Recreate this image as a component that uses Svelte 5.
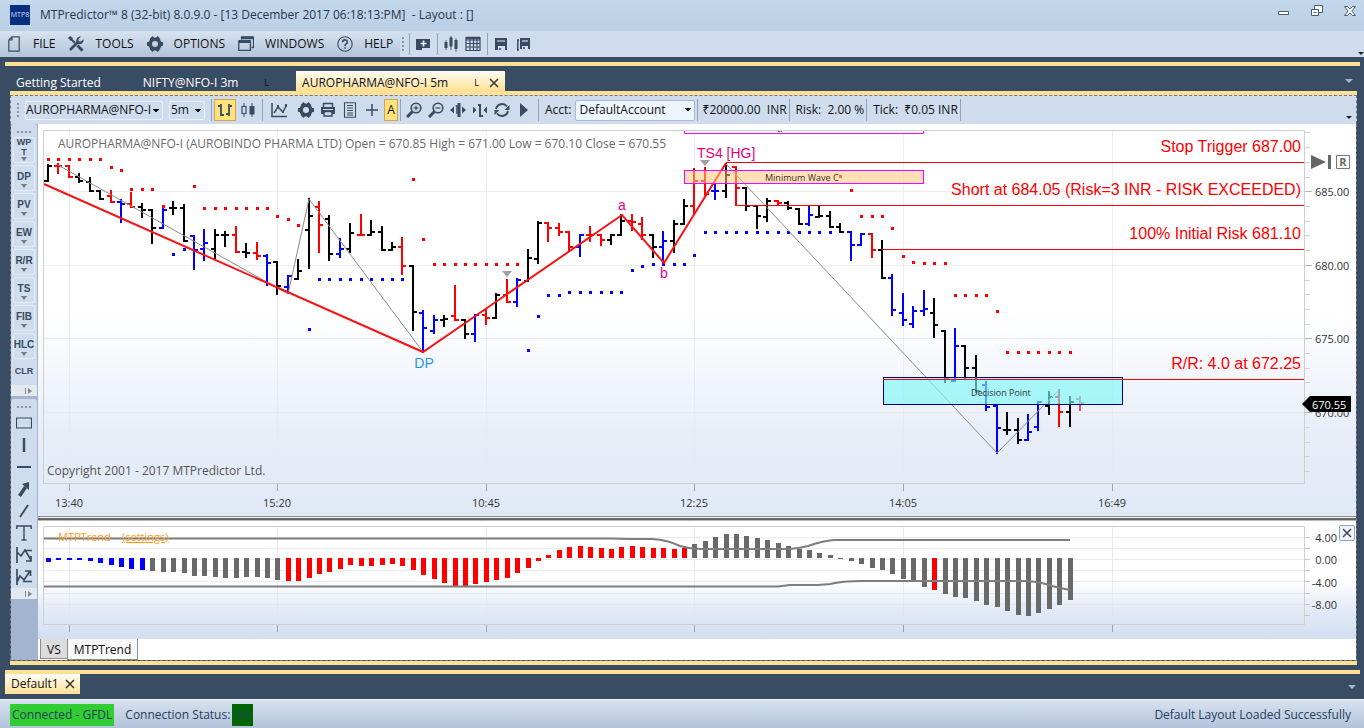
<script>
    // x of a bar from its index
    const barX = (i) => Math.round(48 + i * 10.425);

    // open, high, low, close (chart y) and colour: k black, r red, b blue
    const bars = [
        [181, 165, 181, 166, 'k'], [166, 164, 173, 166, 'r'], [166, 166, 177, 177, 'r'], [177, 174, 182, 181, 'k'],
        [182, 178, 191, 191, 'k'], [191, 191, 199, 199, 'k'], [196, 191, 202, 202, 'r'], [202, 200, 222, 204, 'b'],
        [204, 193, 207, 207, 'r'], [207, 204, 217, 210, 'k'], [210, 210, 243, 228, 'k'], [228, 206, 228, 210, 'b'],
        [208, 202, 214, 208, 'k'], [208, 205, 241, 241, 'k'], [236, 236, 269, 250, 'b'], [249, 230, 260, 243, 'b'],
        [249, 230, 259, 235, 'k'], [235, 232, 246, 235, 'k'], [235, 227, 252, 252, 'r'], [252, 244, 257, 253, 'k'],
        [253, 243, 259, 256, 'r'], [256, 255, 285, 263, 'b'], [262, 262, 294, 286, 'k'], [287, 276, 293, 276, 'b'],
        [279, 260, 279, 271, 'k'], [230, 199, 268, 216, 'k'], [207, 202, 252, 225, 'r'], [219, 216, 260, 254, 'k'],
        [254, 239, 257, 249, 'b'], [249, 224, 252, 233, 'k'], [235, 215, 235, 235, 'r'], [235, 221, 235, 232, 'k'],
        [232, 227, 250, 250, 'k'], [250, 243, 250, 247, 'k'], [247, 238, 274, 266, 'r'], [266, 266, 330, 312, 'k'],
        [313, 311, 352, 328, 'b'], [331, 316, 333, 320, 'b'], [320, 316, 326, 319, 'k'], [316, 286, 320, 320, 'r'],
        [320, 320, 338, 334, 'k'], [334, 315, 341, 315, 'b'], [315, 309, 324, 318, 'r'], [318, 294, 318, 295, 'k'],
        [295, 280, 302, 302, 'r'], [302, 279, 306, 280, 'b'], [281, 250, 281, 258, 'k'], [259, 222, 263, 223, 'k'],
        [223, 223, 241, 228, 'r'], [228, 224, 235, 232, 'r'], [232, 232, 251, 247, 'r'], [247, 235, 256, 235, 'b'],
        [235, 227, 241, 235, 'r'], [235, 235, 245, 240, 'r'], [240, 235, 244, 235, 'k'], [235, 215, 235, 221, 'k'],
        [221, 215, 230, 222, 'r'], [224, 218, 239, 235, 'r'], [235, 235, 257, 247, 'k'], [247, 232, 263, 241, 'b'],
        [241, 221, 252, 224, 'k'], [224, 200, 224, 206, 'k'], [206, 169, 213, 181, 'r'], [181, 168, 195, 194, 'r'],
        [191, 184, 199, 191, 'b'], [191, 164, 197, 175, 'k'], [167, 167, 205, 188, 'r'], [188, 188, 210, 206, 'k'],
        [206, 206, 228, 216, 'k'], [217, 199, 221, 201, 'k'], [201, 201, 205, 203, 'r'], [203, 202, 209, 208, 'k'],
        [209, 209, 224, 224, 'k'], [224, 207, 225, 215, 'b'], [217, 207, 217, 216, 'k'], [216, 212, 227, 227, 'k'],
        [227, 224, 232, 232, 'k'], [232, 232, 260, 245, 'b'], [245, 234, 245, 234, 'b'], [234, 234, 257, 250, 'r'],
        [250, 241, 278, 278, 'k'], [278, 275, 315, 310, 'b'], [313, 294, 325, 320, 'b'], [324, 307, 327, 311, 'b'],
        [311, 291, 315, 309, 'b'], [313, 299, 337, 325, 'k'], [331, 331, 382, 379, 'k'], [381, 329, 381, 346, 'b'],
        [346, 346, 379, 368, 'k'], [368, 356, 392, 391, 'k'], [385, 382, 410, 407, 'b'], [406, 406, 453, 428, 'b'],
        [430, 413, 434, 430, 'k'], [430, 419, 443, 440, 'k'], [440, 415, 440, 432, 'b'], [427, 402, 430, 402, 'b'],
        [406, 392, 414, 397, 'k'], [397, 390, 426, 412, 'r'], [412, 397, 426, 402, 'k'], [399, 397, 410, 403, 'p']
    ];
    const barColors = { k: '#000', r: '#f00', b: '#00f', p: '#e05a5e' };

    // stop dots: first index, last index, y
    const redDots = [
        [0, 5, 159], [6, 6, 167], [7, 7, 170], [8, 10, 189], [11, 11, 206], [14, 14, 186], [15, 21, 208],
        [22, 22, 216], [23, 23, 219], [24, 24, 225], [35, 35, 179], [36, 36, 239], [37, 45, 264], [76, 76, 176],
        [77, 77, 190], [78, 80, 216], [81, 81, 228], [82, 82, 256], [83, 83, 262], [84, 86, 263], [87, 90, 295],
        [91, 91, 311], [92, 98, 352]
    ];
    const blueDots = [
        [12, 12, 254], [13, 13, 249], [25, 25, 329], [26, 34, 279], [46, 46, 350], [47, 47, 316], [48, 49, 295],
        [50, 55, 292], [56, 56, 270], [57, 57, 266], [58, 61, 264], [62, 62, 255], [63, 75, 232]
    ];
    const spread = (runs) => runs.flatMap(([a, b, y]) => Array.from({ length: b - a + 1 }, (_, n) => [barX(a + n), y]));

    const trend = [
        562, 560, 560, 560, 561, 563, 565, 567, 569, 570, 571, 572, 572, 573, 576, 576, 577, 578, 578, 577, 577, 578,
        580, 581, 581, 578, 574, 572, 569, 565, 566, 566, 565, 564, 566, 570, 575, 579, 583, 586, 586, 584, 582, 580,
        578, 573, 568, 561, 555, 550, 547, 546, 547, 548, 549, 547, 546, 547, 548, 548, 549, 548, 544, 541, 537, 534,
        534, 536, 538, 540, 543, 546, 549, 550, 553, 555, 558, 561, 564, 568, 570, 574, 579, 582, 587, 590, 594, 597,
        598, 601, 605, 607, 611, 615, 616, 613, 609, 605, 600
    ];
    function trendColor(i) {
        if (i < 10) return '#00f';
        if ((i > 22 && i < 62) || i === 85) return '#f00';
        return '#696969';
    }

    const times = [[69, '13:40'], [277, '15:20'], [486, '10:45'], [694, '12:25'], [903, '14:05'], [1112, '16:49']];
    const prices = [[191, '685.00'], [265, '680.00'], [338, '675.00'], [412, '670.00']];
    const minorTicks = [132, 147, 162, 177, 206, 221, 235, 250, 280, 294, 309, 324, 353, 368, 382, 397, 427, 442, 456, 471];
    const trendTicks = [[537, '4.00'], [559, '0.00'], [582, '-4.00'], [604, '-8.00']];
    const trendGrid = [537, 548, 559, 570, 581, 593, 604, 615];
    const levels = [
        { x: 726, y: 162, text: 'Stop Trigger 687.00' },
        { x: 736, y: 205, text: 'Short at 684.05 (Risk=3 INR - RISK EXCEEDED)' },
        { x: 882, y: 249, text: '100% Initial Risk 681.10' },
        { x: 883, y: 379, text: 'R/R: 4.0 at 672.25' }
    ];

    const menus = ['FILE', 'TOOLS', 'OPTIONS', 'WINDOWS', 'HELP'];
    const studies = ['WPT', 'DP', 'PV', 'EW', 'R/R', 'TS', 'FIB', 'HLC'];
    const drawTools = ['rect', 'vline', 'hline', 'arrow', 'slash', 'text', 'wave', 'wave2'];
</script>

{#snippet icon(name)}
    <svg class="icon" width="16" height="16" viewBox="0 0 16 16" fill="none" stroke="#394b62" stroke-width="1.5" aria-hidden="true">
        {#if name === 'FILE'}
            <path d="M6 .8h7.2v14.4H2.8V4zM6 1v3H3" stroke-width="1.2" />
        {:else if name === 'TOOLS'}
            <path d="M3 3l4 4M10 10l4 4" stroke-width="2" />
            <path d="M2 14l8-8" stroke-width="2.6" />
            <path d="M13 .5l-2.5 2.7.2 2 2 .2L15.500 3.200a4 4 0 0 1-5.400 4.600 4 4 0 0 1 2.900-7.300z" fill="#394b62" stroke="none" />
            <path d="M0 2l2-2 3 2-2 3zM8.500 10.500l2-2 5 5-2 2.300z" fill="#394b62" stroke="none" />
        {:else if name === 'OPTIONS'}
            <circle cx="8" cy="8" r="4.8" stroke-width="3.6" />
            <path d="M4 1.500l2 2M12 1.500l-2 2M0 8h3M13 8h3M4 14.500l2-2M12 14.500l-2-2" stroke-width="4" />
        {:else if name === 'WINDOWS'}
            <path d="M3.500 3.500v-2h12v10h-2M.8 4.800h11.600v9.600H.8z" stroke-width="1.300" />
            <path d="M1 5.500h11.500M3 1.800h12.500" stroke-width="3" />
        {:else if name === 'HELP'}
            <circle cx="8" cy="8" r="7.2" stroke-width="1.1" />
            <path d="M5.6 6.200c0-3 4.800-3 4.800-.3C10.400 7.700 8 7.800 8 10M8 11.200v1.600" stroke-width="1.600" />
        {:else if name === 'folder'}
            <path d="M1 3h14v9H7v2H1z" fill="#394b62" stroke="none" />
            <path d="M8.500 4.500v6M5.500 7.500h6" stroke="#e4edf8" stroke-width="1.700" />
        {:else if name === 'bars'}
            <path d="M3 6v6M8 1.500v9M13 4v9" stroke-width="3" /><path d="M8 0v14M13 2v14M3 4v10" stroke-width=".8" />
        {:else if name === 'grid'}
            <path d="M1 1.500h14v13H1zM1 4h14M1 7.500h14M1 11h14M5 3v12M8.500 3v12M12 3v12" stroke-width="1.200" /><path d="M1 2h14" stroke-width="2.500" />
        {:else if name === 'save'}
            <path d="M2 2h12v12h-2v-4H5v4H2z" fill="#394b62" stroke="none" /><path d="M4 5h8" stroke="#a9b8cb" stroke-width="1.500" /><path d="M7 12v2" />
        {:else if name === 'saveall'}
            <path d="M5 2h10v11h-2v-3H7v3H5z" fill="#394b62" stroke="none" /><path d="M7 5h6" stroke="#b8c7d8" /><path d="M4 4H2.800v10H4M9 11v2" />
        {:else if name === 'ohlc'}
            <path d="M1 4h3M4 2v12M4 13h3M9 12h3M12 2v12M12 4h3" stroke-width="1.800" />
        {:else if name === 'candle'}
            <path d="M4 1v14" stroke-width="1" /><path d="M2 4.500h4v7H2z" fill="#cfdced" stroke-width="1.200" /><path d="M12 1v14" stroke-width="1" /><path d="M9.500 4h5v8.500h-5z" fill="#394b62" stroke="none" />
        {:else if name === 'line'}
            <path d="M1 1v13.500h15M3 11l4-6 5 5 3-6" /><path d="M6 3h2v3H6zM11 9h2v2h-2zM14 2h2v3h-2z" fill="#394b62" stroke="none" />
        {:else if name === 'print'}
            <path d="M3.500 5V1.500h9V5" /><path d="M1 5h14v7H1z" fill="#394b62" stroke="none" /><path d="M4 9.500h8V14H4z" fill="#cfdced" /><path d="M3 7.500h10" stroke="#cfdced" stroke-width="1" />
        {:else if name === 'doc'}
            <path d="M2.500.8h11v14.400h-11zM5 3.500h6M5 6h6M5 8.500h6M5 11h6M5 13h6" stroke-width="1.100" />
        {:else if name === 'plus'}
            <path d="M8 2v12M2 8h12" />
        {:else if name === 'zoomin' || name === 'zoomout'}
            <circle cx="10" cy="6" r="4.800" stroke-width="1.600" /><path d="M6.500 9.500L1 15" stroke-width="3" /><path d="M7.500 6h5" stroke-width="1.200" />
            {#if name === 'zoomin'}<path d="M10 3.500v5" stroke-width="1.200" />{/if}
        {:else if name === 'widen'}
            <path d="M5.500 4h1.500v8" stroke-width="1.500" /><path d="M9 1v14" stroke-width="3" /><path d="M4 4.500v7L0 8zM12 4.500v7L16 8z" fill="#394b62" stroke="none" />
        {:else if name === 'narrow'}
            <path d="M6 3h2v11h3" stroke-width="2" /><path d="M1 4.500v7L4.500 8zM15 4.500v7L11.500 8z" fill="#394b62" stroke="none" />
        {:else if name === 'refresh'}
            <path d="M2 7a6.200 6.200 0 0 1 11-2.500M14 9a6.200 6.200 0 0 1-11 2.500" stroke-width="2" /><path d="M15.500 3v5H10.500zM.5 13V8h5z" fill="#394b62" stroke="none" />
        {:else if name === 'play'}
            <path d="M4 1l8 7-8 7z" fill="#394b62" stroke="none" />
        {:else if name === 'rect'}
            <path d="M.5 3h15v10H.5z" stroke-width="1.200" />
        {:else if name === 'vline'}
            <path d="M8 1v14" stroke-width="2.500" />
        {:else if name === 'hline'}
            <path d="M1 8h14" stroke-width="2" />
        {:else if name === 'arrow'}
            <path d="M3.500 15l6-9" stroke-width="3.500" /><path d="M6 3l7-2v8z" fill="#394b62" stroke="none" />
        {:else if name === 'slash'}
            <path d="M4 14l8-12" stroke-width="1.800" />
        {:else if name === 'text'}
            <path d="M.8 4V1h14.400v3M8 1v14M5.500 15h5" stroke-width="1.400" />
        {:else if name === 'wave'}
            <path d="M1 0v16M1 5l4 4 4-6 6 10M8.500 3.500H16M15 9v5h-5" stroke-width="1.700" />
        {:else if name === 'wave2'}
            <path d="M1 0v16M1 13l3-6 4 4 6-9M9 2h5.500v5M7 12.500h9" stroke-width="1.700" />
        {:else if name === 'more'}
            <path d="M7.500 5v6" stroke="#888" stroke-width="1" /><path d="M10 5v6l4-3z" fill="#888" stroke="none" />
        {/if}
    </svg>
{/snippet}

{#snippet closeX()}
    <svg width="10" height="10" viewBox="0 0 10 10" stroke="#3b3a32" stroke-width="1.6" aria-hidden="true"><path d="M1 1l8 8M9 1L1 9" /></svg>
{/snippet}

<div class="app">
    <header class="titlebar">
        <span class="logo">MTP8</span>
        <h1>MTPredictor™ 8 (32-bit) 8.0.9.0 - [13 December 2017 06:18:13:PM]&nbsp; - Layout : []</h1>
        <div class="window-buttons">
            <button aria-label="Minimize">
                <svg width="12" height="12" viewBox="0 0 12 12" fill="#fff" stroke="#4b5b70"><path d="M.5 6.500h10v3H.5z" /></svg>
            </button>
            <button aria-label="Restore">
                <svg width="12" height="12" viewBox="0 0 12 12" fill="#fff" stroke="#4b5b70"><path d="M3.500.5h8v7h-8z" /><path d="M.5 4.500h7v6h-7z" /><path d="M2.500 7.500h3" /></svg>
            </button>
            <button aria-label="Close">
                <svg width="12" height="12" viewBox="0 0 12 12" fill="#fff" stroke="#4b5b70"><path d="M.5 1.500h3L6 4l2.500-2.500h3L7.800 6l3.700 4.500h-3L6 8l-2.500 2.500h-3L4.200 6z" /></svg>
            </button>
        </div>
    </header>

    <div class="menubar">
        <nav>
            {#each menus as menu}
                <button>{@render icon(menu)}<span>{menu}</span></button>
            {/each}
        </nav>
        <div class="quick">
            <i class="grip"></i><i class="sep"></i>
            <button aria-label="New">{@render icon('folder')}</button><i class="sep"></i>
            <button aria-label="Chart">{@render icon('bars')}</button>
            <button aria-label="Table">{@render icon('grid')}</button><i class="sep"></i>
            <button aria-label="Save">{@render icon('save')}</button>
            <button aria-label="Save all">{@render icon('saveall')}</button>
        </div>
        <span class="overflow"></span>
    </div>

    <div class="frame">
        <div class="doc">
            <div class="tabs">
                <button class="tab first">Getting Started</button>
                <button class="tab second">NIFTY@NFO-I 3m <small>L</small></button>
                <button class="tab active">AUROPHARMA@NFO-I 5m <small>L</small>{@render closeX()}</button>
                <span class="caret"></span>
            </div>

            <main>
                <div class="toolbar">
                    <i class="grip"></i>
                    <select class="symbol" aria-label="Symbol"><option>AUROPHARMA@NFO-I</option></select>
                    <select class="period" aria-label="Period"><option>5m</option></select>
                    <i class="sep"></i>
                    <button class="on" aria-label="Bars">{@render icon('ohlc')}</button>
                    <button aria-label="Candles">{@render icon('candle')}</button>
                    <i class="sep"></i>
                    <div class="group">
                        <button aria-label="Line">{@render icon('line')}</button>
                        <button aria-label="Settings">{@render icon('OPTIONS')}</button>
                        <button aria-label="Print">{@render icon('print')}</button>
                        <button aria-label="Report">{@render icon('doc')}</button>
                        <button aria-label="Crosshair">{@render icon('plus')}</button>
                    </div>
                    <button class="on letter">A</button>
                    <i class="sep tight"></i>
                    {#each ['zoomin', 'zoomout', 'widen', 'narrow', 'refresh', 'play'] as name}
                        <button aria-label={name}>{@render icon(name)}</button>
                    {/each}
                    <i class="sep"></i>
                    <label for="acct">Acct:</label>
                    <select id="acct" class="acct"><option>DefaultAccount</option></select>
                    <i class="sep tight"></i>
                    <span class="cell">₹20000.00&nbsp; INR</span><i class="sep"></i>
                    <span class="cell">Risk: &nbsp;2.00 %</span><i class="sep"></i>
                    <span class="cell">Tick: &nbsp;₹0.05 INR</span><i class="sep"></i>
                    <span class="overflow"></span>
                </div>

                <div class="body">
                    <aside>
                        <div class="palette">
                            <i class="grip wide"></i>
                            {#each studies as s}
                                <button class="study" class:two={s === 'WPT'}>{#if s === 'WPT'}WP<br />T{:else}{s}{/if}<b></b></button>
                            {/each}
                            <button class="study clr">CLR</button>
                            <button class="more" aria-label="More studies">{@render icon('more')}</button>
                        </div>
                        <div class="palette">
                            <i class="grip wide"></i>
                            {#each drawTools as t}
                                <button class="draw" aria-label={t}>{@render icon(t)}</button>
                            {/each}
                            <button class="more" aria-label="More tools">{@render icon('more')}</button>
                        </div>
                    </aside>

                    <section class="charts">
                        <svg class="price" viewBox="38 124 1318 392">
                            <g stroke="#e7e9ec" stroke-opacity=".8">
                                {#each times as [x]}<path d="M{x}.5 131V483" />{/each}
                                {#each prices as [y]}<path d="M44 {y}.5H1304" />{/each}
                            </g>
                            <path d="M43.500 130.500H1304.500V483.500H43.500z" fill="none" stroke="#cfcfcf" />
                            {#each times as [x, label]}
                                <path d="M{x}.5 484v7" stroke="#9aa5b1" />
                                <text x={x} y="507" text-anchor="middle" class="axis">{label}</text>
                            {/each}
                            {#each minorTicks as y}<path d="M1305 {y}.5h5" stroke="#d6d6d6" />{/each}
                            {#each prices as [y, label]}
                                <path d="M1305 {y}.5h7" stroke="#b5b5b5" />
                                <text x="1315" y={y + 5} class="axis">{label}</text>
                            {/each}
                            <text x="58" y="148" class="info">AUROPHARMA@NFO-I (AUROBINDO PHARMA LTD) Open = 670.85 High = 671.00 Low = 670.10 Close = 670.55</text>
                            <text x="47" y="475" class="copy">Copyright 2001 - 2017 MTPredictor Ltd.</text>

                            <path d="M684.500 131v2.500h239V131" fill="none" stroke="#f0f" />
                            <path d="M778 131.500h2M781 131.500h1" stroke="#555" />

                            {#each bars as [o, h, l, c, k], i}
                                <path d="M{barX(i)} {h - 1}V{l + 1}M{barX(i) - 4} {o}H{barX(i)}M{barX(i)} {c}h4" stroke={barColors[k]} stroke-width="2" fill="none" />
                            {/each}
                            {#each spread(redDots) as [x, y]}<rect x={x - 1} y={y - 1} width="3" height="3" fill="#f00" />{/each}
                            {#each spread(blueDots) as [x, y]}<rect x={x - 1} y={y - 1} width="3" height="3" fill="#00f" />{/each}

                            <path d="M58 165L288 294L309 199L423 352M726 164L997 453L1059 390" fill="none" stroke="#8a8a8a" />
                            <path d="M44 184L423 352L622 215L664 263L726 163" fill="none" stroke="#f81414" stroke-width="2" />
                            <path d="M502 271h10l-5 6zM700 160h10l-5 6z" fill="#a0a0a0" />

                            <rect x="684.5" y="170.500" width="239" height="13" fill="#ffc878" fill-opacity=".55" stroke="#f0f" />
                            <text x="765" y="181" class="zone">Minimum Wave C</text>
                            <rect x="883.5" y="377.500" width="239" height="27" fill="#7ff8f8" fill-opacity=".65" stroke="#000090" />
                            <text x="971" y="396" class="zone">Decision Point</text>

                            {#each levels as l}
                                <path d="M{l.x} {l.y}.5H1304" stroke="#f00" />
                                <text x="1301" y={l.y - 10} text-anchor="end" class="level">{l.text}</text>
                            {/each}

                            <text x="424" y="368" text-anchor="middle" class="mark dp">DP</text>
                            <text x="622" y="210" text-anchor="middle" class="mark">a</text>
                            <text x="664" y="278" text-anchor="middle" class="mark">b</text>
                            <text x="697" y="158" class="mark">TS4 [HG]</text>

                            <path d="M1311 155l15 7-15 7zM1328 155h3v14h-3z" fill="#666" />
                            <path d="M1336.500 155.500h13v13h-13z" fill="#fff" stroke="#777" />
                            <text x="1343" y="166" text-anchor="middle" class="reset">R</text>
                            <path d="M1302 404l8-8h41v16h-41z" fill="#000" />
                            <text x="1312" y="409" class="axis last">670.55</text>
                        </svg>

                        <div class="splitter"></div>

                        <div class="trend">
                            <svg viewBox="38 521 1318 118">
                                <g stroke="#e3e6ea" stroke-opacity=".8">
                                    {#each times as [x]}<path d="M{x}.5 527V624" />{/each}
                                    {#each trendGrid as y}<path d="M44 {y}.5H1304" />{/each}
                                </g>
                                <path d="M43.500 526.500H1304.500V624.500H43.500z" fill="none" stroke="#cfcfcf" />
                                {#each times as [x]}<path d="M{x}.5 625v7" stroke="#9aa5b1" />{/each}
                                {#each trendGrid as y}<path d="M1305 {y}.5h5" stroke="#c9c9c9" />{/each}
                                {#each trendTicks as [y, label]}
                                    <text x="1337" y={y + 5} text-anchor="end" class="axis">{label}</text>
                                {/each}
                                {#each trend as y, i}
                                    <rect x={barX(i) - 2} y={Math.min(y, 558)} width="5" height={Math.max(Math.abs(y - 558), 1)} fill={trendColor(i)} />
                                {/each}
                                <g fill="none" stroke="#7d7d7d" stroke-width="2">
                                    <path d="M44 538.500H610L630 539H652Q668 540 680 546Q690 549 700 549H790Q800 548 808 546Q822 541 834 540H1070" />
                                    <path d="M44 586.500H778L790 585H818L830 584Q842 581 862 581H1028Q1045 583 1052 586Q1060 588 1070 590" />
                                </g>
                                <text x="58" y="541" class="study-name">MTPTrend</text>
                                <a href="#settings"><text x="122" y="541" class="study-name link">(settings)</text></a>
                            </svg>
                            <button class="close-pane" aria-label="Close pane">
                                <svg width="10" height="10" viewBox="0 0 10 10" stroke="#445" stroke-width="1.500"><path d="M1 1l8 8M9 1L1 9" /></svg>
                            </button>
                        </div>

                        <div class="pane-tabs">
                            <button>VS</button>
                            <button class="current">MTPTrend</button>
                        </div>
                    </section>
                </div>
            </main>
        </div>
    </div>

    <div class="layouts">
        <button>Default1 {@render closeX()}</button>
        <span class="caret"></span>
    </div>

    <footer>
        <span class="connected">Connected - GFDL</span>
        <span>Connection Status:</span>
        <span class="ok">OK</span>
        <span class="message">Default Layout Loaded Successfully</span>
    </footer>
</div>

<style>
    :global(body) {
        background: #384c63;
    }
    .app {
        display: flex;
        flex-direction: column;
        min-height: 100vh;
        background: #384c63;
        font: 12px/16px "Open Sans", "Noto Sans", sans-serif;
        color: #111;
    }
    button, select {
        font: inherit;
        color: inherit;
        border: 0;
        padding: 0;
        margin: 0;
        background: none;
        border-radius: 0;
    }
    svg {
        display: block;
    }
    h1 {
        margin: 0;
        font-size: 12px;
        font-weight: 400;
        color: #24364c;
    }
    .icon {
        flex: none;
    }

    .titlebar {
        display: flex;
        align-items: center;
        height: 31px;
        padding: 0 8px 2px 10px;
        box-sizing: border-box;
        background: linear-gradient(#c4d8ec, #b9cfe4);
    }
    .logo {
        width: 20px;
        margin-right: 10px;
        background: #06307f;
        color: #d5def0;
        font-size: 7px;
        line-height: 20px;
        text-align: center;
    }
    .window-buttons {
        display: flex;
        gap: 21px;
        margin-left: auto;
        align-self: flex-start;
        padding-top: 5px;
    }

    .menubar {
        display: flex;
        height: 26px;
        background: #cfdced;
    }
    nav {
        display: flex;
        width: 400px;
        padding-left: 6px;
        box-sizing: border-box;
        gap: 13px;
        background: linear-gradient(#d8e3f1, #b2c2d8);
    }
    nav button {
        display: flex;
        align-items: center;
        gap: 11px;
    }
    .quick {
        display: flex;
        align-items: center;
        gap: 5px;
        padding-left: 2px;
    }
    .quick button {
        padding-right: 1px;
    }
    .grip {
        width: 2px;
        height: 14px;
        background: repeating-linear-gradient(#8296b0 0 2px, transparent 2px 4px);
    }
    .sep {
        width: 1px;
        height: 22px;
        background: #8fa3bf;
    }

    .frame {
        margin: 5px 4px 5px 5px;
        border-top: 4px solid #fee094;
        padding: 5px 3px 0 5px;
    }
    .tabs {
        display: flex;
        height: 20px;
        color: #fff;
    }
    .tab {
        display: flex;
        align-items: center;
        padding: 4px 6px 0;
    }
    .tab.second {
        margin-left: 30px;
    }
    .tab small {
        font-size: 9px;
        color: #111;
        margin-left: 26px;
    }
    .tab.active {
        margin-left: 21px;
        background: linear-gradient(#fffdf6, #fee094);
        color: #111;
    }
    .tab.active svg {
        margin-left: 10px;
    }
    .caret {
        margin-left: auto;
        align-self: center;
        border: 4px solid transparent;
        border-top-color: #a5b5c9;
        border-bottom: 0;
        margin-right: 4px;
    }
    main {
        border-top: 4px solid #fee094;
        border-bottom: 4px solid #fee094;
    }
    .toolbar {
        display: flex;
        align-items: center;
        gap: 6px;
        height: 29px;
        box-sizing: border-box;
        padding-left: 6px;
        border: 1px dashed #777;
        border-bottom: 0;
        background: #cfdced;
    }
    select {
        appearance: none;
        height: 19px;
        box-sizing: border-box;
        padding: 0 12px 0 1px;
        border: 1px solid #e8f0f9;
        border-radius: 2px;
        background-image: linear-gradient(45deg, transparent 50%, #111 50%), linear-gradient(-45deg, transparent 50%, #111 50%);
        background-position: right 6px top 7px, right 3px top 7px;
        background-size: 3px 4px;
        background-repeat: no-repeat;
    }
    .symbol {
        width: 138px;
        padding: 0 9px 0 0;
    }
    .period {
        width: 36px;
    }
    .acct {
        width: 120px;
        height: 21px;
        margin-left: -3px;
        padding-left: 4px;
        border: 1px solid #a9bad3;
        background-color: #edf5fd;
    }
    .toolbar .on {
        padding: 2px;
        border: 1px solid #d8a24a;
        background: #ffe27b;
        margin: 0 -2px 0 -4px;
    }
    .toolbar .letter {
        width: 14px;
        padding: 2px 0;
        margin: 0 0 0 -2px;
    }
    .sep.tight {
        margin: 0 -1px 0 -4px;
    }
    .group {
        display: flex;
        gap: 6px;
        padding-left: 2px;
    }
    .group button:first-child {
        margin-right: 5px;
    }
    .cell {
        margin-right: -4px;
        white-space: nowrap;
    }
    .overflow {
        margin: 14px 4px 0 auto;
        align-self: center;
        border: 3px solid transparent;
        border-top-color: #222;
        border-bottom: 0;
    }
    .menubar .overflow {
        margin: 18px 0 0 auto;
    }
    .body {
        display: flex;
        border: 1px dashed #777;
        border-top: 0;
    }
    aside {
        width: 27px;
        flex: none;
        background: #a2b4ce;
    }
    .palette {
        display: flex;
        flex-direction: column;
        align-items: center;
        width: 26px;
        margin-bottom: 3px;
        padding-top: 7px;
        border-radius: 3px;
        background: #cfdced;
    }
    .grip.wide {
        width: 14px;
        height: 2px;
        margin-bottom: 4px;
        background: repeating-linear-gradient(90deg, #8296b0 0 2px, transparent 2px 4px);
    }
    .study {
        display: flex;
        flex-direction: column;
        align-items: center;
        justify-content: flex-end;
        width: 22px;
        height: 26px;
        margin-bottom: 2px;
        padding-bottom: 2px;
        box-sizing: border-box;
        border: 1px solid #e6eef8;
        border-radius: 2px;
        font: 700 10px/14px "Liberation Sans", sans-serif;
        color: #394b62;
    }
    .study.two {
        padding-bottom: 1px;
        font-size: 9px;
        line-height: 10px;
    }
    .study b {
        border: 3px solid transparent;
        border-top: 4px solid #777;
        border-bottom: 0;
    }
    .study.clr {
        border: 0;
        height: 22px;
        font-size: 9px;
        justify-content: center;
    }
    .draw {
        padding: 3px 0;
    }
    .more {
        display: flex;
        align-items: center;
        justify-content: flex-end;
        width: 100%;
        height: 11px;
        padding-right: 3px;
        background: #e3e9f1;
    }

    .charts {
        flex: 1;
        min-width: 0;
        background: #fff;
    }
    .charts > svg, .trend > svg {
        width: 100%;
        height: auto;
    }
    .price {
        background: linear-gradient(#fff 48%, #e8eef8 78%, #dfe9f6);
    }
    .axis {
        font-size: 11px;
        fill: #333;
    }
    .axis.last {
        fill: #fff;
    }
    .info {
        font-size: 12px;
        fill: #6a6a6a;
    }
    .copy {
        font-size: 12px;
        fill: #555;
    }
    .level {
        font: 16px "Liberation Sans", sans-serif;
        fill: #f00;
    }
    .zone {
        font-size: 9px;
        fill: #333;
    }
    .mark {
        font: 14px "Liberation Sans", sans-serif;
        fill: #e6007e;
    }
    .mark.dp {
        fill: #1e96f0;
    }
    .reset {
        font-weight: 700;
        font-size: 11px;
        fill: #666;
    }
    .splitter {
        height: 5px;
        background: linear-gradient(#8c8c8c 1px, #f4f4f4 1px 2px, #666 2px 4px, #bbb 4px);
    }
    .trend {
        position: relative;
        background: linear-gradient(#fff 50%, #e3ebf7 75%, #d2dff1);
    }
    .study-name {
        font-size: 11px;
        fill: #ff9c1a;
    }
    .link {
        text-decoration: underline;
    }
    .close-pane {
        position: absolute;
        top: 4px;
        right: 1px;
        padding: 2px;
        border: 1px solid #8fa3bf;
        border-radius: 2px;
        background: #eef3fa;
    }
    .pane-tabs {
        display: flex;
        align-items: flex-start;
        height: 21px;
        padding-left: 2px;
        background: #fff;
    }
    .pane-tabs button {
        height: 20px;
        padding: 2px 6px 0;
        border: 1px solid #8c8c94;
        border-top: 0;
        background: #dcdcdc;
    }
    .pane-tabs .current {
        height: 21px;
        margin-left: -1px;
        background: #f8f8f8;
    }

    .layouts {
        display: flex;
        height: 25px;
        margin: 0 4px 0 5px;
        border-top: 4px solid #fee094;
    }
    .layouts button {
        display: flex;
        align-items: center;
        gap: 6px;
        height: 20px;
        padding: 0 5px 0 6px;
        background: linear-gradient(#fffdf6, #fee094);
    }
    footer {
        display: flex;
        align-items: center;
        flex: 1;
        min-height: 28px;
        padding: 2px 13px 0 10px;
        border-top: 1px solid #eef3f9;
        box-sizing: border-box;
        background: linear-gradient(#d7e2f0, #b3c3d8);
        color: #24405f;
    }
    .connected {
        margin-right: 11px;
        padding: 3px 2px;
        background: #32cd32;
    }
    .ok {
        margin-left: 2px;
        padding: 3px 2px;
        background: #006400;
        color: #1c4a5c;
    }
    .message {
        margin-left: auto;
    }
</style>
